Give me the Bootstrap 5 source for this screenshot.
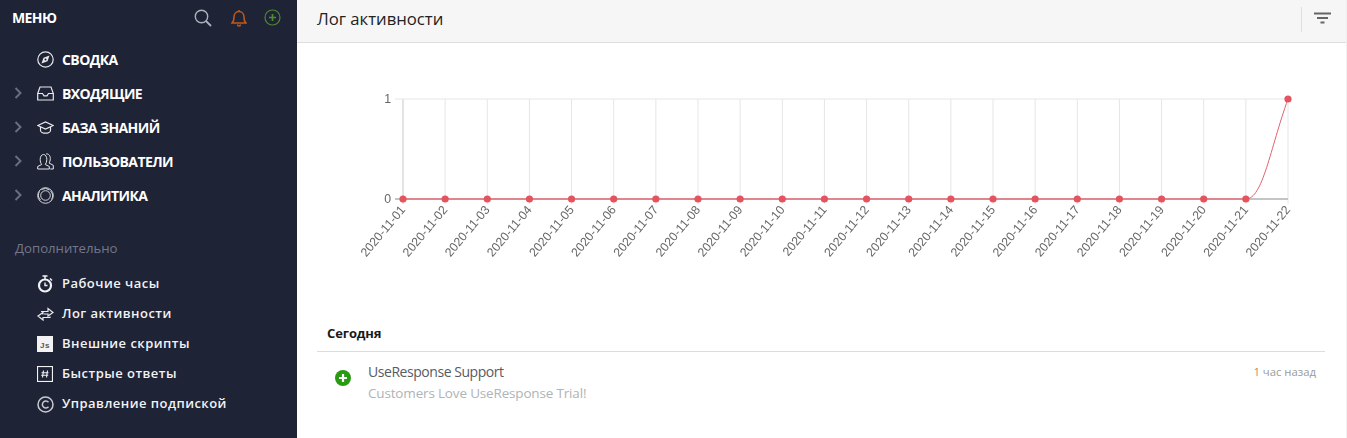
<!DOCTYPE html>
<html lang="ru">
<head>
    <meta charset="UTF-8">
    <title>Лог активности</title>
    <link href="https://cdn.jsdelivr.net/npm/bootstrap@5.3.0/dist/css/bootstrap.min.css" rel="stylesheet">
    <style>
        html, body { height: 100%; overflow: hidden; }
        body { font-family: "Open Sans", "Noto Sans", sans-serif; background: #fff; }
        .app-shell { height: 438px; }
        .side-panel { width: 297px; flex: none; background: #1e2336; color: #fff; }
        .side-head { height: 35px; padding: 0 12px; }
        .side-title { font-size: 14px; font-weight: 700; letter-spacing: -.6px; }
        .head-icons { gap: 17px; margin-right: 4px; }
        .search-icon { margin-right: 2px; }
        .main-links { margin-top: 7px; }
        .main-link { height: 34px; font-size: 14px; font-weight: 700; letter-spacing: -.6px; color: #fff; }
        .arrow-slot { width: 37px; padding-left: 14px; flex: none; }
        .icon-slot { width: 25px; flex: none; }
        .extra-title { margin: 26px 0 11px 15px; font-size: 13.2px; line-height: 20px; color: #74778a; }
        .extra-link { height: 30px; font-size: 13px; font-weight: 600; letter-spacing: .47px; color: #f2f2f4; padding-left: 37px; }
        .extra-link .icon-slot { width: 25px; }
        .main-panel { min-width: 0; border-right: 1px solid #f0f0f0; }
        .top-bar { height: 43px; background: #f6f6f6; border-bottom: 1px solid #dedede; padding: 0 15px 0 20px; }
        .page-title { font-size: 16.7px; font-weight: 400; color: #222; margin: 0; position: relative; top: -2px; }
        .bar-sep { width: 1px; height: 25px; background: #dfdfdf; margin-right: 12px; position: relative; top: -2px; }
        .filter-icon { margin-bottom: 6px; }
        .chart-box { height: 275px; }
        .chart-box svg { display: block; will-change: transform; }
        .chart-label { font-family: "Liberation Sans", sans-serif; font-size: 12.3px; fill: #666; }
        .feed-wrap { padding: 0 21px 0 20px; }
        .day-title { font-size: 13px; font-weight: 700; letter-spacing: -.1px; color: #1a1a1a; padding: 5px 10px 8px; line-height: 20px; border-bottom: 1px solid #dcdcdc; }
        .feed-row { padding: 9px 9px 0 18px; }
        .feed-icon { width: 33px; flex: none; padding-top: 3px; }
        .feed-name { font-size: 14px; line-height: 21px; color: #565b63; letter-spacing: -.45px; }
        .feed-text { font-size: 13.5px; line-height: 22px; padding-top: 0; color: #b0b3b7; letter-spacing: -.17px; }
        .feed-time { font-size: 11.3px; line-height: 21px; color: #9a9a9a; }
        .feed-time b { font-weight: 400; color: #c08a60; }
    </style>
</head>
<body>
<div class="app-shell d-flex">
    <aside class="side-panel">
        <div class="side-head d-flex align-items-center justify-content-between">
            <span class="side-title">МЕНЮ</span>
            <div class="head-icons d-flex align-items-center">
                <svg class="search-icon" width="18" height="18" viewBox="0 0 18 18" fill="none" stroke="#aeb2bd" stroke-width="1.4"><circle cx="7.5" cy="7.5" r="6.2"/><path d="M12 12l5 5" stroke-width="1.8"/></svg>
                <svg width="16" height="18" viewBox="0 0 16 18" fill="none" stroke="#c05a1c" stroke-width="1.5"><path d="M1 14c2-1.500 2-3 2-6 0-3 2-5.500 5-5.500s5 2.500 5 5.500c0 3 0 4.500 2 6z"/><path d="M8 1v1.500M6.500 15.500a1.500 1.500 0 0 0 3 0"/></svg>
                <svg width="17" height="17" viewBox="0 0 17 17" fill="none" stroke="#4e8a2e" stroke-width="1.2"><circle cx="8.500" cy="8.500" r="7.500"/><path d="M8.500 5v7M5 8.500h7" stroke-width="1.700"/></svg>
            </div>
        </div>

        <div class="main-links">
            <div class="main-link d-flex align-items-center">
                <span class="arrow-slot"></span>
                <span class="icon-slot d-flex"><svg width="17" height="17" viewBox="0 0 17 17" fill="none" stroke="#e8e9ec" stroke-width="1.200"><circle cx="8.500" cy="8.500" r="7.700"/><path d="M12.500 4.500l-2 5.800L4.500 12.500l2-5.800z" fill="#e8e9ec" stroke="none"/><circle cx="8.500" cy="8.500" r="1" fill="#1e2336" stroke="none"/></svg></span>
                СВОДКА
            </div>
            <div class="main-link d-flex align-items-center">
                <span class="arrow-slot d-flex"><svg width="8" height="12" viewBox="0 0 8 12" fill="none" stroke="#6b6e7b" stroke-width="2"><path d="M1.500 1l5 5-5 5"/></svg></span>
                <span class="icon-slot d-flex"><svg width="17" height="15" viewBox="0 0 17 15" fill="none" stroke="#e8e9ec" stroke-width="1.200"><path d="M.700 7.500L3 1h11l2.300 6.500V14H.700z"/><path d="M.700 7.500h4.800l1.500 2.300h3l1.500-2.300h4.800"/></svg></span>
                ВХОДЯЩИЕ
            </div>
            <div class="main-link d-flex align-items-center">
                <span class="arrow-slot d-flex"><svg width="8" height="12" viewBox="0 0 8 12" fill="none" stroke="#6b6e7b" stroke-width="2"><path d="M1.500 1l5 5-5 5"/></svg></span>
                <span class="icon-slot d-flex"><svg width="17" height="13" viewBox="0 0 17 13" fill="none" stroke="#e8e9ec" stroke-width="1.200"><path d="M.800 4.500L8.500 1l7.700 3.500-7.700 3.500z"/><path d="M3.500 6v3.500c0 1.500 2.500 2.700 5 2.700s5-1.200 5-2.700V6"/></svg></span>
                БАЗА ЗНАНИЙ
            </div>
            <div class="main-link d-flex align-items-center">
                <span class="arrow-slot d-flex"><svg width="8" height="12" viewBox="0 0 8 12" fill="none" stroke="#6b6e7b" stroke-width="2"><path d="M1.500 1l5 5-5 5"/></svg></span>
                <span class="icon-slot d-flex"><svg width="17" height="17" viewBox="0 0 17 17" fill="none" stroke="#e8e9ec" stroke-width="1"><path d="M.700 16v-2.500l4-2c-1-1.500-1.500-3-1.500-5C3.200 3.500 4.500 1.500 6.500 1.500s3.300 2 3.300 5c0 2-.500 3.500-1.500 5l4 2V16z"/><path d="M9 1c2.500-.500 4.300 1.500 4.300 4.500 0 2-.500 3.500-1.300 4.500l4.300 2.300V16h-3"/></svg></span>
                ПОЛЬЗОВАТЕЛИ
            </div>
            <div class="main-link d-flex align-items-center">
                <span class="arrow-slot d-flex"><svg width="8" height="12" viewBox="0 0 8 12" fill="none" stroke="#6b6e7b" stroke-width="2"><path d="M1.500 1l5 5-5 5"/></svg></span>
                <span class="icon-slot d-flex"><svg width="17" height="17" viewBox="0 0 17 17" fill="none" stroke="#d4d5da" stroke-width="1"><circle cx="8.500" cy="8.500" r="7.800"/><circle cx="8.500" cy="8.500" r="4.800"/><path d="M2.500 4.500a7 7 0 0 0 1 8.500M14.500 12.500a7 7 0 0 0-1-8.500M4.500 2.500a7 7 0 0 1 8 .5"/></svg></span>
                АНАЛИТИКА
            </div>
        </div>

        <div class="extra-title">Дополнительно</div>

        <div class="extra-link d-flex align-items-center">
            <span class="icon-slot d-flex"><svg width="17" height="18" viewBox="0 0 17 18" fill="none" stroke="#f2f2f4" stroke-width="2.200"><circle cx="8" cy="10.500" r="6"/><path d="M5.500 1h5M8 1v3M13 3.500l2 2" stroke-width="1.500"/><path d="M8 7.500v3h2.500" stroke-width="1.400"/></svg></span>
            Рабочие часы
        </div>
        <div class="extra-link d-flex align-items-center">
            <span class="icon-slot d-flex"><svg width="17" height="14" viewBox="0 0 17 14" fill="none" stroke="#e8e9ec" stroke-width="1.200"><path d="M4 4.500H11V1.500L16 5.500 11 9V7H7"/><path d="M13 9.500V10.500H6V13L1 9 6 5.500V7.500"/></svg></span>
            Лог активности
        </div>
        <div class="extra-link d-flex align-items-center">
            <span class="icon-slot d-flex"><svg width="16" height="16" viewBox="0 0 16 16"><rect width="16" height="16" fill="#f2f2f4"/><text x="8" y="11.500" text-anchor="middle" font-size="8" font-weight="700" font-family="Liberation Sans, sans-serif" fill="#555">Js</text></svg></span>
            Внешние скрипты
        </div>
        <div class="extra-link d-flex align-items-center">
            <span class="icon-slot d-flex"><svg width="16" height="16" viewBox="0 0 16 16" fill="none" stroke="#f2f2f4"><rect x=".500" y=".500" width="15" height="15" stroke-width="1.200"/><path d="M6.500 4.500l-1 7M10.500 4.500l-1 7M4.500 6.800h7M4.200 9.300h7" stroke-width="1.100"/></svg></span>
            Быстрые ответы
        </div>
        <div class="extra-link d-flex align-items-center">
            <span class="icon-slot d-flex"><svg width="17" height="17" viewBox="0 0 17 17" fill="none" stroke="#c9cad0" stroke-width="1.500"><circle cx="8.500" cy="8.500" r="7.500"/><path d="M11.500 6.200a3.500 3.500 0 1 0 0 4.600"/></svg></span>
            Управление подпиской
        </div>
    </aside>

    <main class="main-panel flex-grow-1">
        <div class="top-bar d-flex align-items-center">
            <h1 class="page-title flex-grow-1">Лог активности</h1>
            <span class="bar-sep"></span>
            <svg class="filter-icon" width="17" height="12" viewBox="0 0 17 12" fill="none" stroke="#666" stroke-width="2"><path d="M0 1.500h17M3 6h11M6.500 10.500h4"/></svg>
        </div>

        <div class="chart-box">
            <svg id="activity-chart" width="1049" height="275"></svg>
        </div>

        <div class="feed-wrap">
            <div class="day-title">Сегодня</div>
            <div class="feed-row d-flex">
                <div class="feed-icon">
                    <svg width="16" height="16" viewBox="0 0 16 16"><circle cx="8" cy="8" r="8" fill="#2a9a12"/><path d="M8 4v8M4 8h8" stroke="#fff" stroke-width="2.200"/></svg>
                </div>
                <div class="flex-grow-1">
                    <div class="feed-name">UseResponse Support</div>
                    <div class="feed-text">Customers Love UseResponse Trial!</div>
                </div>
                <div class="feed-time"><b>1</b> час назад</div>
            </div>
        </div>
    </main>
</div>

<script src="https://cdn.jsdelivr.net/npm/bootstrap@5.3.0/dist/js/bootstrap.bundle.min.js"></script>
<script>
    // coordinates are relative to the main panel (x - 297, y - 43)
    const chart = document.getElementById("activity-chart");
    const left = 106, right = 991, top_ = 56, bottom = 156;
    const step = (right - left) / 21;
    let out = '';

    for (let i = 0; i < 22; i++) {
        const x = left + i * step;
        const color = i === 0 ? '#c8c8c8' : '#e6e6e6';
        out += `<line x1="${x}" x2="${x}" y1="${top_}" y2="${bottom + 5}" stroke="${color}"/>`;
    }
    out += `<line x1="${left - 8}" x2="${right}" y1="${top_}" y2="${top_}" stroke="#e6e6e6"/>`;
    out += `<line x1="${left - 8}" x2="${right}" y1="${bottom}" y2="${bottom}" stroke="#c4c4c4" stroke-width="2"/>`;
    out += `<text class="chart-label" x="${left - 12}" y="${top_ + 4}" text-anchor="end">1</text>`;
    out += `<text class="chart-label" x="${left - 12}" y="${bottom + 4}" text-anchor="end">0</text>`;

    const lastFlat = left + 20 * step;
    out += `<path d="M${lastFlat} ${bottom}C${lastFlat + 17} ${bottom} ${right - 18} ${top_ + 50} ${right} ${top_}" fill="none" stroke="#e0606c" stroke-width="1"/>`;
    out += `<line x1="${left}" x2="${lastFlat}" y1="${bottom}" y2="${bottom}" stroke="#e8707c" stroke-width="1.500"/>`;

    for (let i = 0; i < 22; i++) {
        const x = left + i * step;
        const y = i === 21 ? top_ : bottom;
        out += `<circle cx="${x}" cy="${y}" r="3.600" fill="#e5535f"/>`;
        const day = String(i + 1).padStart(2, '0');
        out += `<text class="chart-label" text-anchor="end" transform="translate(${x + 3} ${bottom + 11}) rotate(-50)">2020-11-${day}</text>`;
    }
    chart.innerHTML = out;
</script>
</body>
</html>
